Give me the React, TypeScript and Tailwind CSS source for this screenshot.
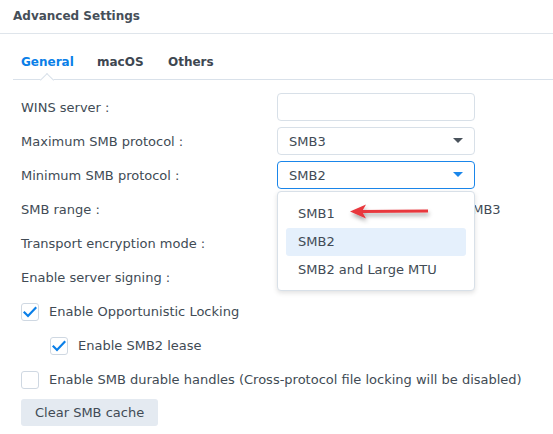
import React from "react";

const font = { fontFamily: '"DejaVu Sans", Verdana, sans-serif' };

function Caret({ color }: { color: string }) {
  return (
    <svg width="10" height="6" viewBox="0 0 10 6">
      <path d="M0 0 L10 0 L5 5 Z" fill={color} />
    </svg>
  );
}

function Check({ checked }: { checked: boolean }) {
  return (
    <span className="w-[18px] h-[18px] rounded-[3px] border border-[#cfd8e2] bg-white flex items-center justify-center shrink-0">
      {checked && (
        <svg width="14" height="12" viewBox="0 0 14 12">
          <path d="M1.5 6.5 L5 10 L12.5 2" stroke="#0a7fe8" strokeWidth="2.2" fill="none" strokeLinecap="square" />
        </svg>
      )}
    </span>
  );
}

export default function App() {
  return (
    <div className="w-[553px] h-[434px] bg-white overflow-hidden text-[13px] text-[#414b55] relative" style={font}>
      <div className="h-[34px] border-b border-[#dfe5eb] pl-[13px] pt-[7px] font-bold text-[12px] text-[#464f59]">
        Advanced Settings
      </div>
      <div className="ml-[13px] h-[46px] border-b border-[#d9e1ea] flex items-end relative">
        <div className="flex pl-[8px] pb-[8px] font-bold text-[12px]">
          <span className="text-[#0a7fe8] w-[76px]">General</span>
          <span className="text-[#3e4751] w-[71px]">macOS</span>
          <span className="text-[#3e4751]">Others</span>
        </div>
        <div className="absolute left-[29px] bottom-[-6px] w-[10px] h-[10px] rotate-45 bg-white border-l border-t border-[#d9e1ea]" />
      </div>
      <div className="pl-[21px] pt-[11px] flex flex-col">
        <div className="flex items-center h-[34px]">
          <span className="w-[256px]">WINS server :</span>
          <div className="w-[198px] h-[28px] -mt-[2px] rounded-[4px] border border-[#d8e0e8]" />
        </div>
        <div className="flex items-center h-[34px]">
          <span className="w-[256px]">Maximum SMB protocol :</span>
          <div className="w-[198px] h-[28px] -mt-[2px] rounded-[4px] border border-[#d8e0e8] flex items-center justify-between px-[11px]">
            <span className="mt-[2px]">SMB3</span>
            <Caret color="#4a535c" />
          </div>
        </div>
        <div className="flex items-center h-[34px]">
          <span className="w-[256px]">Minimum SMB protocol :</span>
          <div className="w-[198px] h-[28px] -mt-[2px] rounded-[4px] border border-[#1a86ea] flex items-center justify-between px-[11px]">
            <span className="mt-[2px]">SMB2</span>
            <Caret color="#1a86ea" />
          </div>
        </div>
        <div className="flex items-center h-[34px]">
          <span className="w-[256px]">SMB range :</span>
          <span className="pl-[29px]">SMB2 and Large MTU ~ SMB3</span>
        </div>
        <div className="flex items-center h-[34px]">
          <span>Transport encryption mode :</span>
        </div>
        <div className="flex items-center h-[34px]">
          <span>Enable server signing :</span>
        </div>
        <div className="flex items-center h-[34px] gap-[10px]">
          <Check checked />
          <span>Enable Opportunistic Locking</span>
        </div>
        <div className="flex items-center h-[34px] gap-[10px] pl-[29px]">
          <Check checked />
          <span>Enable SMB2 lease</span>
        </div>
        <div className="flex items-center h-[34px] gap-[10px]">
          <Check checked={false} />
          <span>Enable SMB durable handles (Cross-protocol file locking will be disabled)</span>
        </div>
        <div className="pt-[2px]">
          <button className="h-[27px] px-[14px] rounded-[3px] bg-[#e4eaf1] text-[#414b55]" style={font}>
            Clear SMB cache
          </button>
        </div>
      </div>

      <div className="absolute left-[277px] top-[191px] w-[198px] h-[100px] bg-white rounded-[4px] border border-[#d8e0e8] shadow-[0_2px_5px_rgba(0,0,0,0.12)] px-[8px] pt-[8px] flex flex-col">
        <div className="h-[28px] flex items-center pl-[12px]">SMB1</div>
        <div className="h-[28px] flex items-center pl-[12px] bg-[#e5f0fc] rounded-[3px]">SMB2</div>
        <div className="h-[28px] flex items-center pl-[12px]">SMB2 and Large MTU</div>
      </div>

      <svg className="absolute left-[347px] top-[199px]" width="90" height="26" viewBox="0 0 90 26">
        <defs>
          <filter id="sh" x="-20%" y="-50%" width="140%" height="200%">
            <feDropShadow dx="1" dy="3" stdDeviation="2" floodColor="#000" floodOpacity="0.35" />
          </filter>
        </defs>
        <g filter="url(#sh)">
          <path d="M14 11 L81 10.5 L81 13.5 L14 14 Z" fill="#e8373d" />
          <path d="M3 12.5 L19 5.5 L15 12.5 L19 19.5 Z" fill="#e8373d" />
        </g>
      </svg>
    </div>
  );
}
